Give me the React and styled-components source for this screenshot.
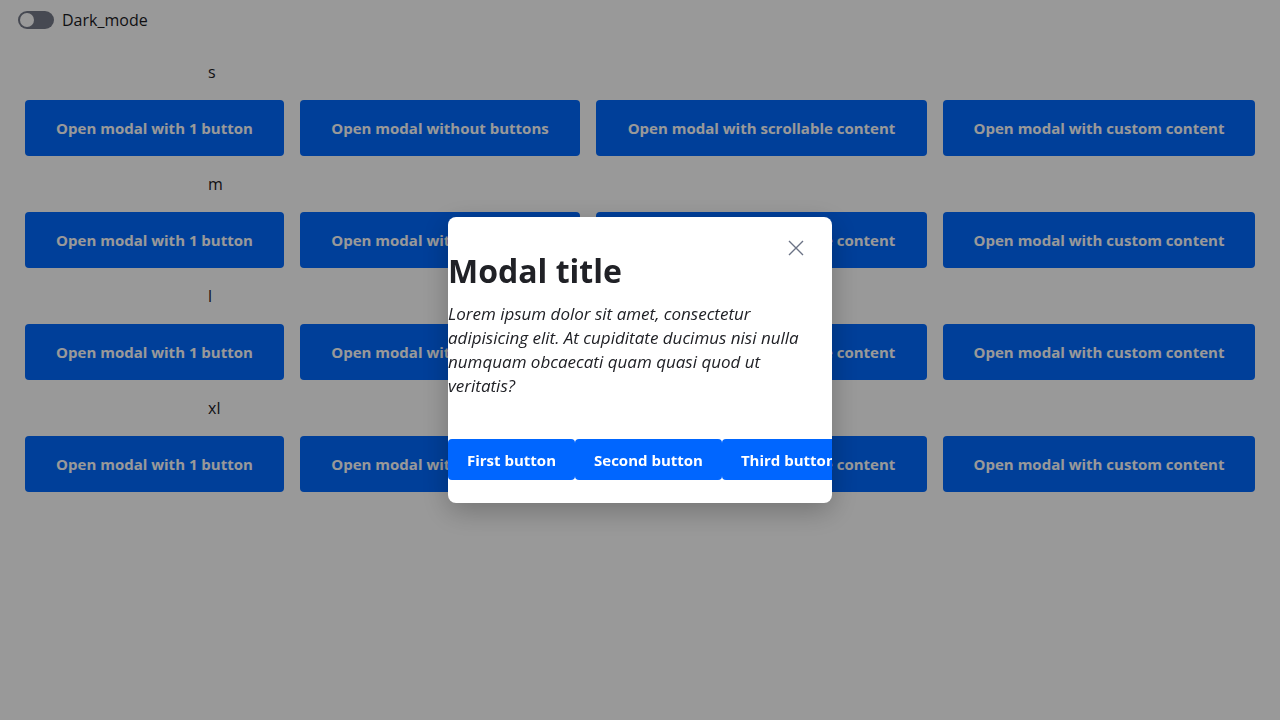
import React from "react"
import styled, { createGlobalStyle } from "styled-components"

const GlobalStyle = createGlobalStyle`
  html, body {
    margin: 0;
    padding: 0;
    background: #ffffff;
    font-family: "Open Sans", "Noto Sans", sans-serif;
    color: #1b1b1f;
  }
`

const Page = styled.div`
  min-height: 720px;
  display: flex;
  flex-direction: column;
`

const TopBar = styled.label`
  display: flex;
  align-items: center;
  gap: 8px;
  padding: 11px 18px;
  font-size: 16px;
  line-height: 18px;
  color: #1b1b1f;
`

const Track = styled.span`
  width: 36px;
  height: 18px;
  border-radius: 9px;
  background: #767b89;
  display: flex;
  align-items: center;
  padding: 0 2px;
  box-sizing: border-box;
`

const Knob = styled.span`
  width: 14px;
  height: 14px;
  border-radius: 50%;
  background: #ffffff;
`

const Sections = styled.div`
  display: flex;
  flex-direction: column;
  padding: 21px 25px 0;
`

const SizeLabel = styled.div`
  padding-left: 183px;
  height: 22px;
  line-height: 22px;
  font-size: 16px;
  margin-bottom: 17px;
`

const Row = styled.div`
  display: grid;
  grid-template-columns: 259px 280px 331px 312px;
  gap: 16px;
  margin-bottom: 17px;
`

const OpenButton = styled.button`
  height: 56px;
  border: none;
  border-radius: 4px;
  background: #0069ff;
  color: #ffffff;
  font-family: inherit;
  font-size: 15px;
  font-weight: 700;
  cursor: pointer;
`

const Overlay = styled.div`
  position: fixed;
  inset: 0;
  background: rgba(0, 0, 0, 0.4);
  display: flex;
  align-items: center;
  justify-content: center;
`

const Modal = styled.div`
  position: relative;
  width: 384px;
  height: 286px;
  box-sizing: border-box;
  background: #ffffff;
  border-radius: 8px;
  box-shadow: 0 8px 28px rgba(0, 0, 0, 0.25);
  overflow: hidden;
  padding-top: 34px;
  display: flex;
  flex-direction: column;
`

const CloseButton = styled.button`
  position: absolute;
  top: 19px;
  right: 24px;
  width: 24px;
  height: 24px;
  padding: 0;
  border: none;
  background: transparent;
  display: flex;
  align-items: center;
  justify-content: center;
  color: #6b7285;
  cursor: pointer;
`

const Title = styled.h2`
  margin: 0;
  font-size: 32px;
  line-height: 40px;
  font-weight: 700;
  color: #202126;
`

const Body = styled.p`
  margin: 11px 0 0;
  padding-right: 12px;
  font-size: 17px;
  line-height: 24px;
  font-style: italic;
  color: #202126;
`

const Actions = styled.div`
  display: flex;
  margin-top: 41px;
`

const ActionButton = styled.button`
  flex: none;
  height: 41px;
  padding: 0 19px;
  border: none;
  border-radius: 4px;
  background: #0066ff;
  color: #ffffff;
  font-family: inherit;
  font-size: 15px;
  font-weight: 700;
  white-space: nowrap;
`

const sizes = ["s", "m", "l", "xl"]
const labels = [
  "Open modal with 1 button",
  "Open modal without buttons",
  "Open modal with scrollable content",
  "Open modal with custom content",
]

function CloseIcon() {
  return (
    <svg width="16" height="16" viewBox="0 0 16 16" fill="none">
      <path d="M1 1 L15 15 M15 1 L1 15" stroke="currentColor" strokeWidth="1.4" />
    </svg>
  )
}

export default function App() {
  return (
    <Page>
      <GlobalStyle />
      <TopBar>
        <Track>
          <Knob />
        </Track>
        Dark_mode
      </TopBar>
      <Sections>
        {sizes.map((size) => (
          <React.Fragment key={size}>
            <SizeLabel>{size}</SizeLabel>
            <Row>
              {labels.map((label) => (
                <OpenButton key={label}>{label}</OpenButton>
              ))}
            </Row>
          </React.Fragment>
        ))}
      </Sections>
      <Overlay>
        <Modal>
          <CloseButton aria-label="close">
            <CloseIcon />
          </CloseButton>
          <Title>Modal title</Title>
          <Body>
            Lorem ipsum dolor sit amet, consectetur adipisicing elit. At cupiditate ducimus
            nisi nulla numquam obcaecati quam quasi quod ut veritatis?
          </Body>
          <Actions>
            <ActionButton>First button</ActionButton>
            <ActionButton>Second button</ActionButton>
            <ActionButton>Third button</ActionButton>
          </Actions>
        </Modal>
      </Overlay>
    </Page>
  )
}
